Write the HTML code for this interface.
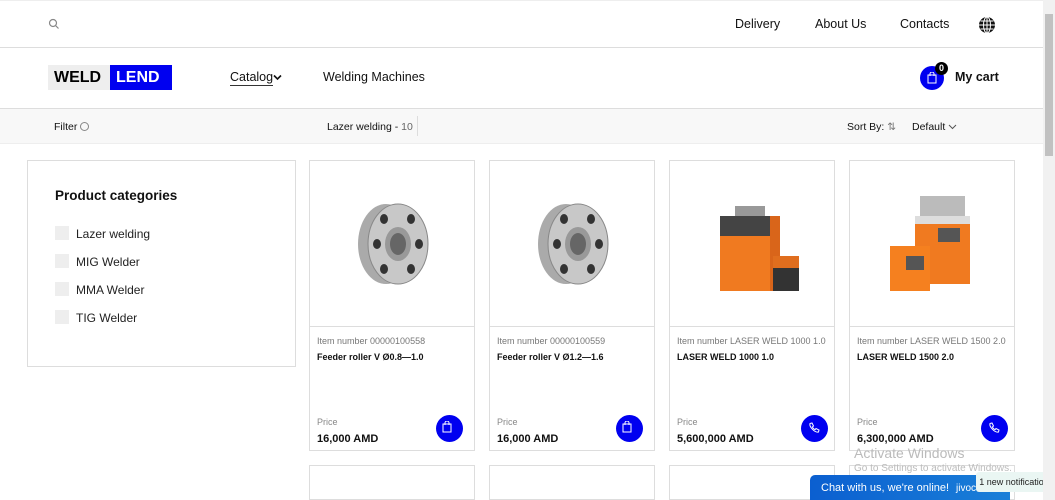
<!DOCTYPE html><html style="height:500px;overflow:hidden"><head><meta charset="utf-8"><style>
*{box-sizing:border-box;margin:0;padding:0}
body{width:1055px;height:500px;overflow:hidden;font-family:"Liberation Sans",sans-serif;background:#fff;color:#111;position:relative}
.a{position:absolute}
.card{position:absolute;top:160px;width:166px;height:291px;border:1px solid #ddd;background:#fff}
.card .img{height:166px;border-bottom:1px solid #ddd;position:relative}
.card .num{position:absolute;left:7px;top:175px;font-size:9px;color:#777}
.card .nm{position:absolute;left:7px;top:191px;font-size:9px;font-weight:bold}
.card .pl{position:absolute;left:7px;top:256px;font-size:9px;color:#888}
.card .pr{position:absolute;left:7px;top:272px;font-size:11px;font-weight:bold}
.card .btn{position:absolute;left:126px;top:254px;width:27px;height:27px;border-radius:50%;background:#0000f0}
.cat{position:absolute;left:55px;font-size:12px;color:#222}
.cat:before{content:"";position:absolute;left:0;top:-1px;width:14px;height:14px;background:#eee}
.cat span{margin-left:21px}
</style></head><body>
<div class="a" style="left:0;top:0;width:1043px;height:1px;background:#eee"></div>
<svg class="a" style="left:48px;top:18px" width="12" height="12" viewBox="0 0 12 12"><circle cx="5" cy="5" r="3.5" fill="none" stroke="#888" stroke-width="1.2"/><path d="M7.5 7.5L10.5 10.5" stroke="#888" stroke-width="1.2"/></svg>
<div class="a" style="left:735px;top:17px;font-size:12.5px">Delivery</div>
<div class="a" style="left:815px;top:17px;font-size:12.5px">About Us</div>
<div class="a" style="left:900px;top:17px;font-size:12.5px">Contacts</div>
<svg class="a" style="left:978px;top:16px" width="18" height="18" viewBox="0 0 18 18"><circle cx="9" cy="9" r="8" fill="#111"/><g stroke="#fff" stroke-width="1" fill="none"><ellipse cx="9" cy="9" rx="3.5" ry="8"/><path d="M9 1v16M1 9h16M2.5 5h13M2.5 13h13"/></g></svg>
<div class="a" style="left:0;top:47px;width:1043px;height:1px;background:#ddd"></div>
<div class="a" style="left:48px;top:65px;width:62px;height:25px;background:#eee;font-weight:900;font-size:16px;line-height:25px;padding-left:6px;color:#000">WELD</div>
<div class="a" style="left:110px;top:65px;width:62px;height:25px;background:#0000f0;color:#fff;font-weight:900;font-size:16px;line-height:25px;padding-left:6px">LEND</div>
<div class="a" style="left:230px;top:70px;font-size:12.5px;border-bottom:1px solid #333;padding-bottom:1px">Catalog</div>
<svg class="a" style="left:273px;top:74px" width="9" height="7" viewBox="0 0 9 7"><path d="M1 1.5L4.5 5L8 1.5" stroke="#111" stroke-width="1.6" fill="none"/></svg>
<div class="a" style="left:323px;top:70px;font-size:12.5px">Welding Machines</div>
<div class="a" style="left:920px;top:66px;width:24px;height:24px;border-radius:50%;background:#0000f0"></div>
<svg class="a" style="left:927px;top:72px" width="10" height="12" viewBox="0 0 10 12"><rect x="1" y="3" width="8" height="8" fill="none" stroke="#fff"/><path d="M3 4V2a2 2 0 0 1 4 0v2" stroke="#fff" fill="none"/></svg>
<div class="a" style="left:935px;top:62px;width:13px;height:13px;border-radius:50%;background:#000;color:#fff;font-size:9px;font-weight:bold;text-align:center;line-height:13px">0</div>
<div class="a" style="left:955px;top:70px;font-size:12.5px;font-weight:bold">My cart</div>
<div class="a" style="left:0;top:108px;width:1043px;height:36px;background:#f8f8f8;border-top:1px solid #ddd;border-bottom:1px solid #eee"></div>
<div class="a" style="left:54px;top:121px;font-size:10.5px">Filter</div>
<div class="a" style="left:80px;top:122px;width:9px;height:9px;border:1px solid #888;border-radius:50%"></div>
<div class="a" style="left:327px;top:121px;font-size:10.5px">Lazer welding - <span style="color:#666">10</span></div>
<div class="a" style="left:417px;top:116px;width:1px;height:20px;background:#ddd"></div>
<div class="a" style="left:847px;top:121px;font-size:10.5px">Sort By: <span style="color:#777">⇅</span></div>
<div class="a" style="left:912px;top:121px;font-size:10.5px">Default</div>
<svg class="a" style="left:948px;top:124px" width="9" height="6" viewBox="0 0 9 6"><path d="M1 1L4.5 4.5L8 1" stroke="#555" fill="none"/></svg>
<div class="a" style="left:27px;top:160px;width:269px;height:207px;border:1px solid #ddd"></div>
<div class="a" style="left:55px;top:188px;font-size:13.5px;font-weight:bold">Product categories</div>
<div class="cat" style="top:227px"><span>Lazer welding</span></div>
<div class="cat" style="top:255px"><span>MIG Welder</span></div>
<div class="cat" style="top:283px"><span>MMA Welder</span></div>
<div class="cat" style="top:311px"><span>TIG Welder</span></div>

<div class="card" style="left:309px"><div class="img"><svg class="a" style="left:38px;top:35px" width="90" height="95" viewBox="0 0 90 95"><ellipse cx="38" cy="48" rx="28" ry="40" fill="#aaa"/><ellipse cx="50" cy="48" rx="30" ry="40" fill="#c8c8c8" stroke="#888"/><ellipse cx="50" cy="48" rx="13" ry="17" fill="#999"/><ellipse cx="50" cy="48" rx="8" ry="11" fill="#666"/><g fill="#333"><ellipse cx="36" cy="23" rx="4" ry="5"/><ellipse cx="63" cy="23" rx="4" ry="5"/><ellipse cx="29" cy="48" rx="4" ry="5"/><ellipse cx="71" cy="48" rx="4" ry="5"/><ellipse cx="36" cy="73" rx="4" ry="5"/><ellipse cx="63" cy="73" rx="4" ry="5"/></g></svg></div><div class="num">Item number 00000100558</div><div class="nm">Feeder roller V Ø0.8—1.0</div><div class="pl">Price</div><div class="pr">16,000 AMD</div><div class="btn"></div></div>
<div class="card" style="left:489px"><div class="img"><svg class="a" style="left:38px;top:35px" width="90" height="95" viewBox="0 0 90 95"><ellipse cx="38" cy="48" rx="28" ry="40" fill="#aaa"/><ellipse cx="50" cy="48" rx="30" ry="40" fill="#c8c8c8" stroke="#888"/><ellipse cx="50" cy="48" rx="13" ry="17" fill="#999"/><ellipse cx="50" cy="48" rx="8" ry="11" fill="#666"/><g fill="#333"><ellipse cx="36" cy="23" rx="4" ry="5"/><ellipse cx="63" cy="23" rx="4" ry="5"/><ellipse cx="29" cy="48" rx="4" ry="5"/><ellipse cx="71" cy="48" rx="4" ry="5"/><ellipse cx="36" cy="73" rx="4" ry="5"/><ellipse cx="63" cy="73" rx="4" ry="5"/></g></svg></div><div class="num">Item number 00000100559</div><div class="nm">Feeder roller V Ø1.2—1.6</div><div class="pl">Price</div><div class="pr">16,000 AMD</div><div class="btn"></div></div>
<div class="card" style="left:669px"><div class="img"><svg class="a" style="left:45px;top:45px" width="95" height="90" viewBox="0 0 95 90"><rect x="20" y="0" width="30" height="12" fill="#999"/><rect x="5" y="10" width="60" height="20" fill="#444"/><rect x="5" y="30" width="60" height="55" fill="#f07a20"/><rect x="55" y="10" width="10" height="75" fill="#d9651a"/><rect x="58" y="50" width="26" height="35" fill="#e06e1e"/><rect x="58" y="62" width="26" height="23" fill="#333"/></svg></div><div class="num">Item number LASER WELD 1000 1.0</div><div class="nm">LASER WELD 1000 1.0</div><div class="pl">Price</div><div class="pr">5,600,000 AMD</div><div class="btn" style="left:131px;top:254px"></div></div>
<div class="card" style="left:849px"><div class="img"><svg class="a" style="left:40px;top:35px" width="95" height="100" viewBox="0 0 95 100"><rect x="30" y="0" width="45" height="20" fill="#bbb"/><rect x="25" y="20" width="55" height="10" fill="#ddd"/><rect x="25" y="28" width="55" height="60" fill="#f07a20"/><rect x="48" y="32" width="22" height="14" fill="#555"/><rect x="0" y="50" width="40" height="45" fill="#f5801f"/><rect x="16" y="60" width="18" height="14" fill="#555"/></svg></div><div class="num">Item number LASER WELD 1500 2.0</div><div class="nm">LASER WELD 1500 2.0</div><div class="pl">Price</div><div class="pr">6,300,000 AMD</div><div class="btn" style="left:131px;top:254px"></div></div>
<svg class="a" style="left:442px;top:421px" width="10" height="12" viewBox="0 0 10 12"><rect x="1" y="3" width="8" height="8" fill="none" stroke="#fff"/><path d="M3 4V2a2 2 0 0 1 4 0v2" stroke="#fff" fill="none"/></svg>
<svg class="a" style="left:622px;top:421px" width="10" height="12" viewBox="0 0 10 12"><rect x="1" y="3" width="8" height="8" fill="none" stroke="#fff"/><path d="M3 4V2a2 2 0 0 1 4 0v2" stroke="#fff" fill="none"/></svg>
<svg class="a" style="left:808px;top:422px" width="12" height="12" viewBox="0 0 12 12"><path d="M2 1.5l2-0.5 1.5 3-1.2 1a6 6 0 0 0 2.7 2.7l1-1.2 3 1.5-0.5 2C7 11 1 5 2 1.5z" fill="none" stroke="#fff"/></svg>
<svg class="a" style="left:988px;top:422px" width="12" height="12" viewBox="0 0 12 12"><path d="M2 1.5l2-0.5 1.5 3-1.2 1a6 6 0 0 0 2.7 2.7l1-1.2 3 1.5-0.5 2C7 11 1 5 2 1.5z" fill="none" stroke="#fff"/></svg>

<div class="card" style="left:309px;top:465px;height:35px"></div>
<div class="card" style="left:489px;top:465px;height:35px"></div>
<div class="card" style="left:669px;top:465px;height:35px"></div>
<div class="card" style="left:849px;top:465px;height:35px"></div>
<div class="a" style="left:854px;top:445px;font-size:14px;color:#bbb">Activate Windows</div>
<div class="a" style="left:854px;top:463px;font-size:10px;color:#bbb">Go to Settings to activate Windows.</div>
<div class="a" style="left:810px;top:475px;width:200px;height:25px;background:linear-gradient(90deg,#0b5fd0,#1a7fd8);border-radius:5px 5px 0 0"></div>
<div class="a" style="left:821px;top:482px;font-size:11px;color:#fff">Chat with us, we're online!</div>
<div class="a" style="left:956px;top:483px;font-size:10px;color:#fff">jivoc</div>
<div class="a" style="left:976px;top:472px;width:76px;height:20px;background:#eaf6f3;border-radius:3px;font-size:9px;line-height:20px;text-align:center;color:#222;white-space:nowrap;overflow:hidden">1 new notification</div>
<div class="a" style="left:1043px;top:0;width:12px;height:500px;background:#f1f1f1"></div>
<div class="a" style="left:1045px;top:14px;width:8px;height:142px;background:#c1c1c1"></div>
</body></html>
